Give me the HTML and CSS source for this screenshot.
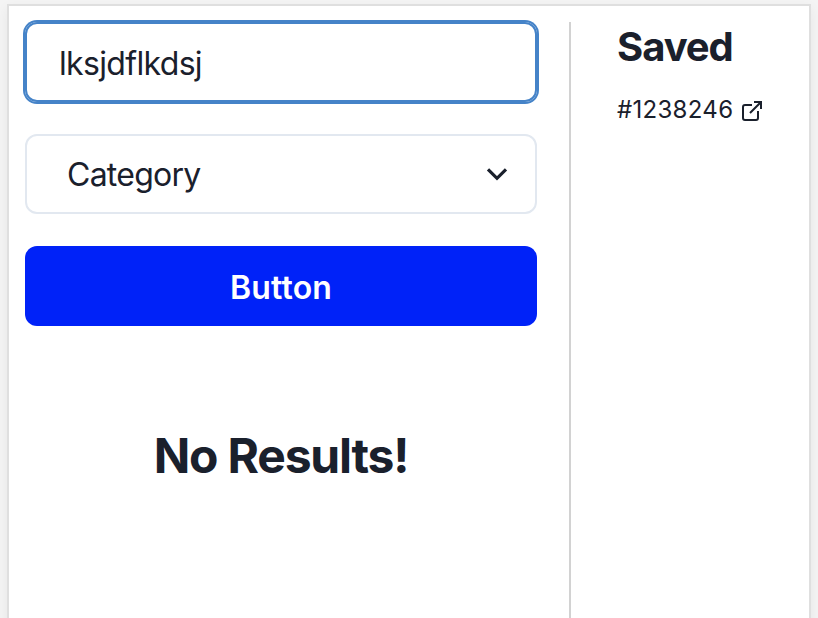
FILE: index.html
```html
<!DOCTYPE html>
<html lang="en">
<head>
<meta charset="utf-8">
<title>Search</title>
<link rel="stylesheet" href="styles.css">
</head>
<body>
<div class="panel">
  <main class="search">
    <div class="field">lksjdflkdsj</div>
    <div class="select"><span>Category</span>
      <svg class="chevron" viewBox="0 0 24 24"><path d="M3 7.3 12 16.3 21 7.3" fill="none" stroke="currentColor" stroke-width="3.2"/></svg>
    </div>
    <button class="button">Button</button>
    <h2 class="empty">No Results!</h2>
  </main>
  <aside class="saved">
    <h2 class="title">Saved</h2>
    <a class="link"><span>#1238246</span>
      <svg class="external" viewBox="0 0 20 20" fill="none" stroke="currentColor" stroke-width="2"><path d="M10 4H3a2 2 0 0 0-2 2v11a2 2 0 0 0 2 2h11a2 2 0 0 0 2-2v-7M12 1h7v7M19 1 8 12"/></svg>
    </a>
  </aside>
</div>
</body>
</html>
```

FILE: styles.css
```css
* { box-sizing: border-box; }
body {
  margin: 0;
  height: 618px;
  overflow: hidden;
  padding: 4px 7px 0;
  background: #f4f4f4;
  color: #1a202c;
  font-family: Inter, sans-serif;
}
.panel {
  display: flex;
  height: 640px;
  padding: 16px 0 0 16px;
  border: 2px solid #dfdfdf;
  background: #fff;
  box-shadow: 0 4px 12px rgba(0, 0, 0, 0.06);
}
.search { width: 512px; }
.field {
  height: 80px;
  padding: 1px 32px 0;
  border: 2px solid #4583c8;
  border-radius: 12px;
  box-shadow: 0 0 0 2px #4583c8;
  font-size: 32px;
  line-height: 78px;
  letter-spacing: -0.66px;
}
.select {
  display: flex;
  align-items: center;
  justify-content: space-between;
  height: 80px;
  margin-top: 32px;
  padding: 0 26px 0 40px;
  border: 2px solid #e2e8f0;
  border-radius: 12px;
  font-size: 32px;
  letter-spacing: -0.75px;
}
.chevron { width: 24px; height: 24px; }
.button {
  display: block;
  width: 100%;
  height: 80px;
  margin-top: 32px;
  padding: 2px 0 0;
  border: 0;
  border-radius: 12px;
  background: #0022f8;
  color: #fff;
  font: 600 32px Inter, sans-serif;
  letter-spacing: 0.2px;
}
.empty {
  margin: 101px 0 0;
  font-size: 48px;
  line-height: 58px;
  letter-spacing: -1.2px;
  text-align: center;
}
.saved {
  flex: 1;
  margin-left: 32px;
  padding-left: 46px;
  border-left: 2px solid #d2d2d2;
}
.title {
  margin: 1px 0 0;
  font-size: 40px;
  line-height: 48px;
  letter-spacing: -1.05px;
}
.link {
  display: flex;
  align-items: center;
  gap: 9px;
  margin-top: 21px;
  font-size: 24px;
  line-height: 36px;
  letter-spacing: 0.3px;
}
.external {
  width: 20px;
  height: 20px;
  margin-top: 2px;
}
```
